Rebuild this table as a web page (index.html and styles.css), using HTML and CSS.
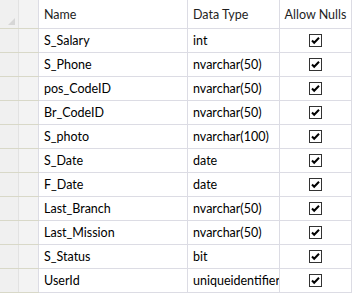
FILE: index.html
```html
<!DOCTYPE html>
<html lang="en">
<head>
  <meta charset="UTF-8">
  <title>Table Design</title>
  <link rel="stylesheet" href="styles.css">
</head>
<body>
  <table class="grid">
    <thead>
      <tr>
        <th class="sel"><span class="corner"></span></th>
        <th class="gutter"></th>
        <th class="col-name">Name</th>
        <th class="col-type">Data Type</th>
        <th class="col-null">Allow Nulls</th>
      </tr>
    </thead>
    <tbody id="rows"></tbody>
  </table>
  <script>
    const cols = [
      ['S_Salary', 'int'],
      ['S_Phone', 'nvarchar(50)'],
      ['pos_CodeID', 'nvarchar(50)'],
      ['Br_CodeID', 'nvarchar(50)'],
      ['S_photo', 'nvarchar(100)'],
      ['S_Date', 'date'],
      ['F_Date', 'date'],
      ['Last_Branch', 'nvarchar(50)'],
      ['Last_Mission', 'nvarchar(50)'],
      ['S_Status', 'bit'],
      ['UserId', 'uniqueidentifier']
    ];
    const check = '<svg class="chk" width="13" height="13" viewBox="0 0 13 13"><rect x="0.5" y="0.5" width="12" height="12" fill="#fff" stroke="#333"/><path d="M3 6.5 L5.2 8.8 L10 3.8" fill="none" stroke="#000" stroke-width="2"/></svg>';
    document.getElementById('rows').innerHTML = cols.map(c =>
      `<tr><td class="sel"></td><td class="gutter"></td><td>${c[0]}</td><td>${c[1]}</td><td class="null">${check}</td></tr>`
    ).join('');
  </script>
</body>
</html>
```

FILE: styles.css
```css
body {
  margin: 0;
  background: #fff;
  font-family: "Segoe UI", Lato, sans-serif;
  font-size: 12.5px;
  color: #000;
}
.grid {
  border-collapse: collapse;
  table-layout: fixed;
  width: 352px;
}
.grid th, .grid td {
  border-right: 1px solid #dcdce4;
  border-bottom: 1px solid #dcdce4;
  padding: 0 0 0 5px;
  text-align: left;
  white-space: nowrap;
  overflow: hidden;
}
.grid th {
  height: 28px;
  font-weight: normal;
  color: #1e1e1e;
  background: #fff;
}
.grid td {
  height: 23px;
}
.grid .sel {
  width: 18px;
  padding: 0;
  background: #f0f0f0;
  border-right-color: #e2e2e2;
  border-bottom-color: #d8d8c8;
  position: relative;
}
.grid .gutter {
  width: 19px;
  padding: 0;
  background: #f3f3f3;
  border-bottom-color: #d8d8c8;
}
.col-name {width: 143px;}
.col-type {width: 86px;}
.grid .col-null {width: 71px; padding: 0; text-align: center;}
.grid td.null {padding: 0; text-align: center;}
.chk {display: block; margin: 0 auto;}
.corner {
  position: absolute;
  right: 3px;
  bottom: 3px;
  width: 0;
  height: 0;
  border-left: 7px solid transparent;
  border-bottom: 7px solid #d6d6d6;
}
```
